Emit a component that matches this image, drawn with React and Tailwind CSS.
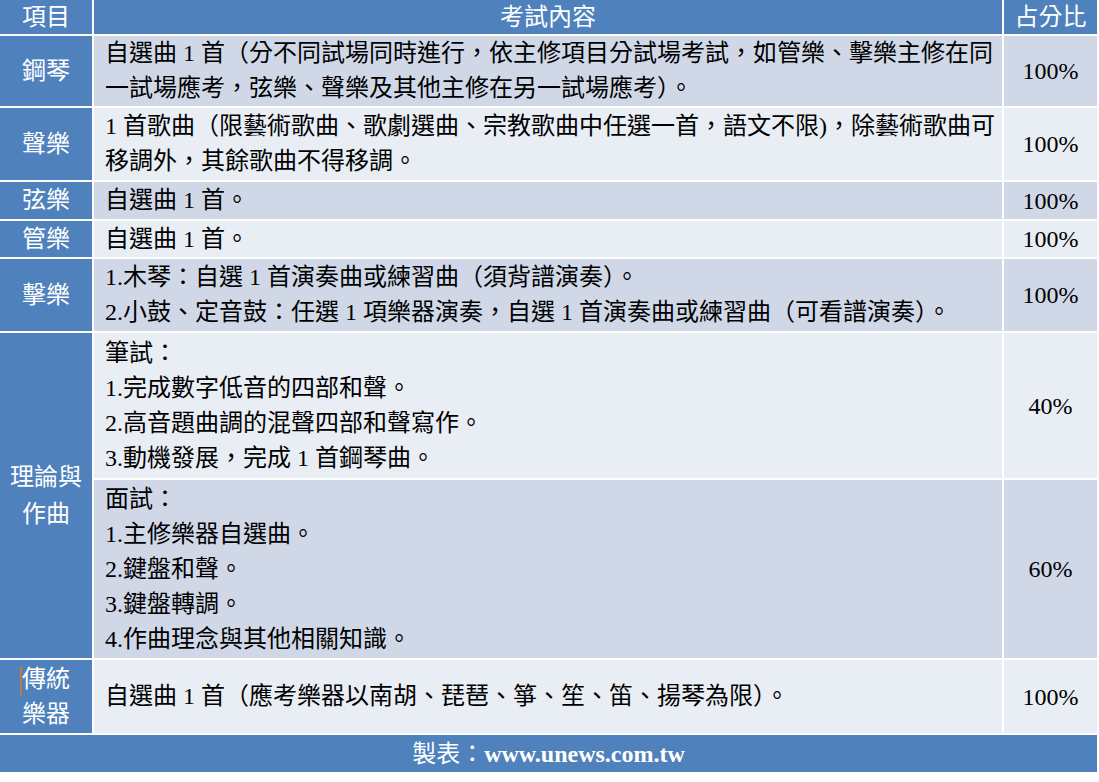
const rows = [
  {
    label: '鋼琴',
    lines: [
      '自選曲 1 首（分不同試場同時進行，依主修項目分試場考試，如管樂、擊樂主修在同',
      '一試場應考，弦樂、聲樂及其他主修在另一試場應考）。',
    ],
    pct: '100%',
    dark: true,
  },
  {
    label: '聲樂',
    lines: [
      '1 首歌曲（限藝術歌曲、歌劇選曲、宗教歌曲中任選一首，語文不限)，除藝術歌曲可',
      '移調外，其餘歌曲不得移調。',
    ],
    pct: '100%',
    dark: false,
  },
  { label: '弦樂', lines: ['自選曲 1 首。'], pct: '100%', dark: true },
  { label: '管樂', lines: ['自選曲 1 首。'], pct: '100%', dark: false },
  {
    label: '擊樂',
    lines: [
      '1.木琴：自選 1 首演奏曲或練習曲（須背譜演奏）。',
      '2.小鼓、定音鼓：任選 1 項樂器演奏，自選 1 首演奏曲或練習曲（可看譜演奏）。',
    ],
    pct: '100%',
    dark: true,
  },
];

const theory = [
  {
    lines: ['筆試：', '1.完成數字低音的四部和聲。', '2.高音題曲調的混聲四部和聲寫作。', '3.動機發展，完成 1 首鋼琴曲。'],
    pct: '40%',
    dark: false,
  },
  {
    lines: ['面試：', '1.主修樂器自選曲。', '2.鍵盤和聲。', '3.鍵盤轉調。', '4.作曲理念與其他相關知識。'],
    pct: '60%',
    dark: true,
  },
];

function Label({ children }) {
  return (
    <div className="bg-[#4f81bd] text-white flex items-center justify-center text-center leading-[37px]">
      {children}
    </div>
  );
}

function Content({ lines, dark }) {
  return (
    <div
      className={
        (dark ? 'bg-[#d0d8e8]' : 'bg-[#e9edf4]') +
        ' flex flex-col justify-center pl-[11px] text-black whitespace-nowrap leading-[35px]'
      }
    >
      {lines.map((l, i) => (
        <div key={i}>{l}</div>
      ))}
    </div>
  );
}

function Pct({ value, dark }) {
  return (
    <div
      className={
        (dark ? 'bg-[#d0d8e8]' : 'bg-[#e9edf4]') + ' flex items-center justify-center text-black'
      }
    >
      {value}
    </div>
  );
}

export default function App() {
  return (
    <div className="bg-white min-h-screen font-['Liberation_Serif','Noto_Sans_CJK_TC',serif] text-[24px]">
      <div className="w-[1097px] grid grid-cols-[92px_908px_93px] grid-rows-[34px_70px_72px_37px_36px_72px_145px_178px_73px_37px] gap-[2px]">
        <Label>項目</Label>
        <div className="bg-[#4f81bd] text-white flex items-center justify-center">考試內容</div>
        <div className="bg-[#4f81bd] text-white flex items-center justify-center">占分比</div>

        {rows.map((r) => (
          <React.Fragment key={r.label}>
            <Label>{r.label}</Label>
            <Content lines={r.lines} dark={r.dark} />
            <Pct value={r.pct} dark={r.dark} />
          </React.Fragment>
        ))}

        <div className="row-span-2 bg-[#4f81bd] text-white flex flex-col items-center justify-center leading-[37px]">
          <div>理論與</div>
          <div>作曲</div>
        </div>
        <Content lines={theory[0].lines} dark={theory[0].dark} />
        <Pct value={theory[0].pct} dark={theory[0].dark} />
        <Content lines={theory[1].lines} dark={theory[1].dark} />
        <Pct value={theory[1].pct} dark={theory[1].dark} />

        <div className="bg-[#4f81bd] text-white flex flex-col items-center justify-center leading-[35px]">
          <div className="relative">
            <span className="absolute left-[-2px] top-[4px] w-[2px] h-[30px] bg-[#b97a45]" />
            傳統
          </div>
          <div>樂器</div>
        </div>
        <Content lines={['自選曲 1 首（應考樂器以南胡、琵琶、箏、笙、笛、揚琴為限）。']} dark={false} />
        <Pct value="100%" dark={false} />

        <div className="col-span-3 bg-[#4f81bd] text-white flex items-center justify-center">
          <span>製表：</span>
          <span className="font-bold">www.unews.com.tw</span>
        </div>
      </div>
    </div>
  );
}

import React from 'react';
